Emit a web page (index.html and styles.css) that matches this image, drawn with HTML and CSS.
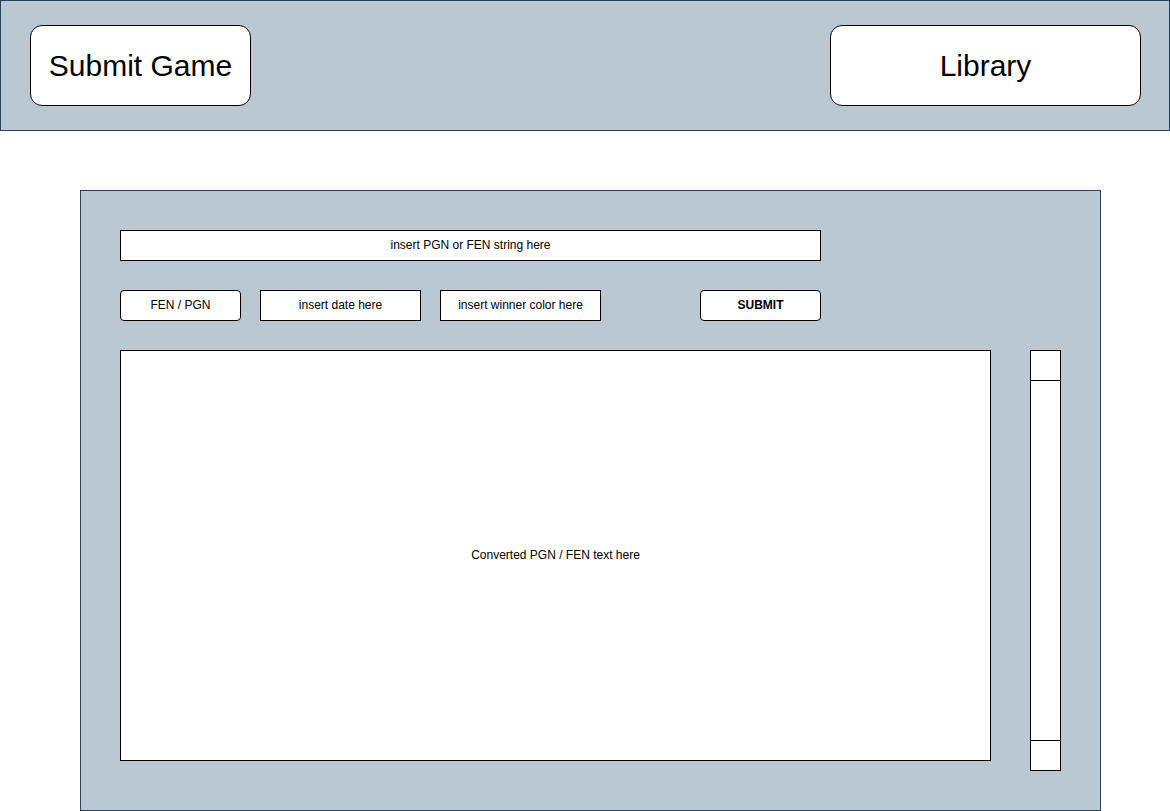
FILE: index.html
```html
<!DOCTYPE html>
<html>
<head>
<meta charset="utf-8">
<link rel="stylesheet" href="styles.css">
</head>
<body>
<header class="topbar">
  <div class="nav-btn nav-submit">Submit Game</div>
  <div class="nav-btn nav-library">Library</div>
</header>
<main class="panel">
  <div class="field field-wide">insert PGN or FEN string here</div>
  <div class="controls">
    <div class="field field-round field-small">FEN / PGN</div>
    <div class="field field-mid">insert date here</div>
    <div class="field field-mid">insert winner color here</div>
    <div class="field field-round field-small field-bold field-submit">SUBMIT</div>
  </div>
  <div class="content">
    <div class="output">Converted PGN / FEN text here</div>
    <div class="scrollbar">
      <div class="scroll-cap"></div>
      <div class="scroll-track"></div>
      <div class="scroll-cap"></div>
    </div>
  </div>
</main>
</body>
</html>
```
FILE: styles.css
```css
* { box-sizing: border-box; }
html, body { margin: 0; padding: 0; background: #ffffff; }
body {
  width: 1170px;
  height: 811px;
  overflow: hidden;
  font-family: "Liberation Sans", Arial, sans-serif;
  color: #000;
}
.topbar {
  width: 1170px;
  height: 131px;
  background: #bac8d3;
  border: 1px solid #23445d;
  padding: 24px 28px 24px 29px;
  display: flex;
  justify-content: space-between;
  align-items: flex-start;
}
.nav-btn {
  height: 81px;
  background: #fff;
  border: 1px solid #000;
  border-radius: 12px;
  display: flex;
  align-items: center;
  justify-content: center;
  font-size: 30px;
}
.nav-submit { width: 221px; }
.nav-library { width: 311px; }
.panel {
  margin: 59px 0 0 80px;
  width: 1021px;
  height: 621px;
  background: #bac8d3;
  border: 1px solid #23445d;
  padding: 39px 0 0 39px;
  display: flex;
  flex-direction: column;
  gap: 29px;
}
.field {
  height: 31px;
  background: #fff;
  border: 1px solid #000;
  display: flex;
  align-items: center;
  justify-content: center;
  font-size: 12px;
  padding-bottom: 2px;
}
.field-wide { width: 701px; }
.controls { display: flex; gap: 19px; }
.field-small { width: 121px; }
.field-mid { width: 161px; }
.field-round { border-radius: 4px; }
.field-bold { font-weight: bold; }
.field-submit { margin-left: 80px; }
.content { display: flex; gap: 39px; align-items: flex-start; }
.output {
  width: 871px;
  height: 411px;
  background: #fff;
  border: 1px solid #000;
  display: flex;
  align-items: center;
  justify-content: center;
  font-size: 12px;
  padding-bottom: 2px;
}
.scrollbar {
  width: 31px;
  height: 421px;
  background: #fff;
  border: 1px solid #000;
  display: flex;
  flex-direction: column;
}
.scroll-cap { height: 29px; flex: none; }
.scroll-track {
  flex: 1;
  border-top: 1px solid #000;
  border-bottom: 1px solid #000;
}
```
